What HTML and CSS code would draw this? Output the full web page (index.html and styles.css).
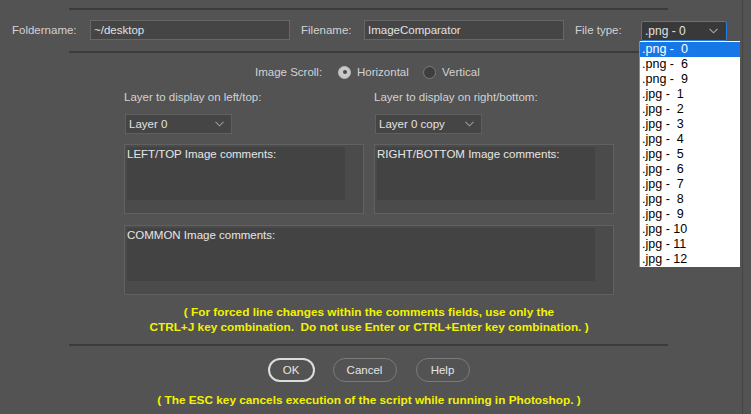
FILE: index.html
```html
<!DOCTYPE html>
<html>
<head>
<meta charset="utf-8">
<link rel="stylesheet" href="styles.css">
</head>
<body>
<div class="window">
  <div class="rule top-rule"></div>

  <div class="row-files">
    <span class="lbl w-folder">Foldername:</span>
    <div class="field w-field">~/desktop</div>
    <span class="lbl w-file">Filename:</span>
    <div class="field w-field">ImageComparator</div>
    <span class="lbl w-type">File type:</span>
    <div class="dropdown">
      <span>.png - 0</span>
      <svg class="chev" width="9" height="6" viewBox="0 0 9 6"><path d="M0.5 0.8 L4.5 4.8 L8.5 0.8" fill="none" stroke="#a8a8a8" stroke-width="1.1"/></svg>
    </div>
  </div>

  <div class="rule mid-rule"></div>

  <div class="content">
    <div class="scroll-row">
      <span class="lbl w-scroll">Image Scroll:</span>
      <span class="radio-opt w-horiz"><span class="radio on"></span><span class="lbl">Horizontal</span></span>
      <span class="radio-opt"><span class="radio"></span><span class="lbl">Vertical</span></span>
    </div>

    <div class="layers">
      <div class="col">
        <div class="lbl layer-lbl">Layer to display on left/top:</div>
        <div class="select"><span>Layer 0</span><svg class="chev" width="9" height="6" viewBox="0 0 9 6"><path d="M0.5 0.8 L4.5 4.8 L8.5 0.8" fill="none" stroke="#9a9a9a" stroke-width="1.1"/></svg></div>
        <div class="ta"><div class="ta-inner">LEFT/TOP Image comments:</div></div>
      </div>
      <div class="col">
        <div class="lbl layer-lbl">Layer to display on right/bottom:</div>
        <div class="select"><span>Layer 0 copy</span><svg class="chev" width="9" height="6" viewBox="0 0 9 6"><path d="M0.5 0.8 L4.5 4.8 L8.5 0.8" fill="none" stroke="#9a9a9a" stroke-width="1.1"/></svg></div>
        <div class="ta"><div class="ta-inner">RIGHT/BOTTOM Image comments:</div></div>
      </div>
    </div>

    <div class="ta common"><div class="ta-inner">COMMON Image comments:</div></div>

    <div class="note">( For forced line changes within the comments fields, use only the<br>CTRL+J key combination.&nbsp; Do not use Enter or CTRL+Enter key combination. )</div>

    <div class="rule bottom-rule"></div>

    <div class="buttons">
      <button class="btn btn-ok">OK</button>
      <button class="btn btn-cancel">Cancel</button>
      <button class="btn btn-help">Help</button>
    </div>

    <div class="note esc">( The ESC key cancels execution of the script while running in Photoshop. )</div>
  </div>

  <ul class="menu">
    <li class="sel">.png -  0</li>
    <li>.png -  6</li>
    <li>.png -  9</li>
    <li>.jpg -  1</li>
    <li>.jpg -  2</li>
    <li>.jpg -  3</li>
    <li>.jpg -  4</li>
    <li>.jpg -  5</li>
    <li>.jpg -  6</li>
    <li>.jpg -  7</li>
    <li>.jpg -  8</li>
    <li>.jpg -  9</li>
    <li>.jpg - 10</li>
    <li>.jpg - 11</li>
    <li>.jpg - 12</li>
  </ul>
</div>
</body>
</html>
```

FILE: styles.css
```css
* { box-sizing: border-box; }
html, body { margin: 0; padding: 0; }
body {
  background: #535353;
  font-family: "Liberation Sans", Arial, sans-serif;
  font-size: 11.5px;
  color: #d2d2d2;
  width: 751px;
  height: 414px;
  overflow: hidden;
}
.window {
  position: relative;
  width: 743px;
  height: 414px;
  padding-top: 8px;
  border-right: 1px solid #444444;
}
.rule {
  height: 2px;
  background: #3b3b3b;
}
.top-rule, .mid-rule {
  margin-left: 69px;
  width: 599px;
}
.mid-rule { margin-top: 11px; }

.row-files {
  display: flex;
  align-items: flex-start;
  margin-top: 10px;
  padding-left: 12px;
  height: 20px;
}
.lbl { white-space: nowrap; }
.row-files .lbl { line-height: 20px; }
.w-folder { width: 78px; }
.w-file { width: 63px; margin-left: 11px; }
.w-type { width: 66px; margin-left: 11px; }
.field {
  height: 20px;
  background: #454545;
  border: 1px solid #676767;
  color: #e2e2e2;
  padding-left: 3px;
  line-height: 18px;
}
.w-field { width: 200px; }
.dropdown {
  margin-top: 1px;
  width: 86px;
  height: 20px;
  background: #393939;
  border: 1px solid #2a7ce0;
  border-radius: 2px;
  color: #e2e2e2;
  display: flex;
  align-items: center;
  justify-content: space-between;
  padding: 0 8px 0 3px;
  font-size: 12px;
}

.content {
  margin-left: 69px;
  width: 600px;
}
.scroll-row {
  display: flex;
  align-items: center;
  height: 18px;
  margin-top: 10px;
  padding-left: 186px;
}
.w-scroll { width: 83px; }
.radio-opt { display: flex; align-items: center; gap: 6px; }
.w-horiz { width: 85px; }
.radio {
  width: 13px;
  height: 13px;
  border-radius: 50%;
  border: 1px solid #7a7a7a;
  background: #3e3e3e;
  display: flex;
  align-items: center;
  justify-content: center;
}
.radio.on {
  background: #c9c9c9;
  border-color: #bdbdbd;
}
.radio.on::after {
  content: "";
  width: 4px;
  height: 4px;
  border-radius: 50%;
  background: #4a4a4a;
}

.layers {
  display: grid;
  grid-template-columns: 240px 240px;
  column-gap: 10px;
  margin-left: 55px;
  margin-top: 8px;
}
.layer-lbl {
  height: 16px;
  line-height: 16px;
}
.select {
  margin-top: 9px;
  margin-left: 1px;
  width: 107px;
  height: 20px;
  background: #454545;
  border: 1px solid #5f5f5f;
  color: #e2e2e2;
  display: flex;
  align-items: center;
  justify-content: space-between;
  padding: 0 7px 0 3px;
}
.ta {
  margin-top: 10px;
  height: 70px;
  border: 1px solid #616161;
  background: #4b4b4b;
  padding: 2px 18px 13px 2px;
}
.ta-inner {
  height: 100%;
  background: #434343;
  color: #e6e6e6;
  line-height: 14px;
  padding-top: 0px;
}
.common {
  margin-left: 55px;
  width: 490px;
  margin-top: 11px;
}
.note {
  margin-top: 10px;
  text-align: center;
  color: #f2f200;
  font-weight: bold;
  font-size: 11.8px;
  line-height: 15px;
}
.bottom-rule {
  width: 599px;
  margin-top: 9px;
}
.buttons {
  display: flex;
  justify-content: center;
  gap: 18px;
  margin-top: 12px;
  padding-right: 1px;
}
.btn {
  height: 24px;
  border-radius: 12px;
  background: transparent;
  border: 1px solid #7b7b7b;
  color: #e6e6e6;
  font-family: inherit;
  font-size: 11.5px;
  padding: 0;
}
.btn-ok { width: 47px; border: 2px solid #dcdcdc; }
.btn-cancel { width: 64px; }
.btn-help { width: 54px; margin-left: 1px; }
.esc { margin-top: 11px; }

.menu {
  position: absolute;
  left: 639px;
  top: 41px;
  width: 101px;
  margin: 0;
  padding: 1px 0 0 0;
  list-style: none;
  background: #ffffff;
  border-left: 1px solid #8a8a8a;
}
.menu li {
  height: 15px;
  line-height: 15px;
  padding-left: 2px;
  color: #000;
  font-size: 12.5px;
  white-space: pre;
}
.menu li.sel {
  background: #1877e6;
  color: #ffffff;
}
```
